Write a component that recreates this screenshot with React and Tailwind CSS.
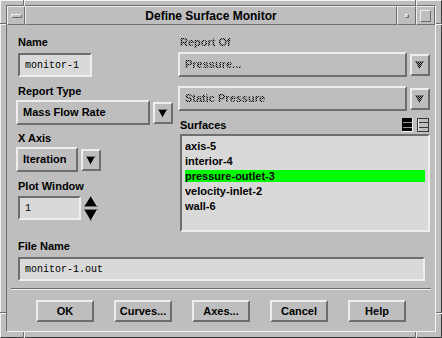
const raised2 = 'border-2 border-t-[#eeeeee] border-l-[#eeeeee] border-b-[#6e6e6e] border-r-[#6e6e6e]';
const sunken2 = 'border-2 border-t-[#6e6e6e] border-l-[#6e6e6e] border-b-[#eeeeee] border-r-[#eeeeee]';
const raised1 = 'border border-t-[#eeeeee] border-l-[#eeeeee] border-b-[#6e6e6e] border-r-[#6e6e6e]';

function Label({ children, grey }) {
  return (
    <div
      className={
        grey
          ? 'h-[13px] ml-[2px] text-[11px] leading-[13px] font-bold text-transparent bg-clip-text bg-[repeating-conic-gradient(#000_0_25%,#9a9a9a_0_50%)] bg-[length:2px_2px] w-fit'
          : 'h-[13px] ml-[2px] text-[11px] leading-[13px] font-bold'
      }
    >
      {children}
    </div>
  );
}

function Field({ className, value }) {
  return (
    <div className={`${sunken2} ${className} h-[24px] bg-[#d9d9d9] flex items-center pl-[5px] font-['Liberation_Mono',monospace] text-[10px]`}>
      {value}
    </div>
  );
}

function ArrowBtn({ grey }) {
  return (
    <div className={`${raised2} w-[20px] h-[22px] mt-[2px] shrink-0 flex items-center justify-center`}>
      <svg width="10" height="9" viewBox="0 0 10 9">
        <polygon points="0,0 10,0 5,9" fill={grey ? 'url(#stip)' : '#000'} />
        <line x1="9.5" y1="0.5" x2="5" y2="8.5" stroke="#e6e6e6" strokeWidth="1" />
        <line x1="0" y1="0.5" x2="9" y2="0.5" stroke="#777" strokeWidth="1" />
      </svg>
    </div>
  );
}

function Option({ className, text, grey }) {
  return (
    <div className={`${raised2} ${className} h-[25px] flex items-center pl-[5px] text-[11px] font-bold`}>
      {grey ? (
        <span className="text-transparent bg-clip-text bg-[repeating-conic-gradient(#000_0_25%,#9a9a9a_0_50%)] bg-[length:2px_2px]">
          {text}
        </span>
      ) : (
        text
      )}
    </div>
  );
}

export default function App() {
  const surfaces = ['axis-5', 'interior-4', 'pressure-outlet-3', 'velocity-inlet-2', 'wall-6'];
  return (
    <div className="w-[442px] h-[338px] bg-[#bebebe] font-['Liberation_Sans',Arial,sans-serif] text-black">
      <svg width="0" height="0" className="absolute">
        <defs>
          <pattern id="stip" width="2" height="2" patternUnits="userSpaceOnUse">
            <rect width="1" height="1" fill="#000" />
            <rect x="1" y="1" width="1" height="1" fill="#000" />
            <rect x="1" y="0" width="1" height="1" fill="#9a9a9a" />
            <rect x="0" y="1" width="1" height="1" fill="#9a9a9a" />
          </pattern>
        </defs>
      </svg>
      <div className="relative w-full h-full flex flex-col border border-t-[#f2f2f2] border-l-[#f2f2f2] border-b-[#3a3a3a] border-r-[#3a3a3a] pt-[4px] pl-[5px] pr-[5px] pb-[5px]">
        {/* frame corner ticks */}
        <div className="absolute left-[22px] top-[-1px] w-[1px] h-[6px] bg-[#6e6e6e]" />
        <div className="absolute left-[23px] top-[-1px] w-[1px] h-[6px] bg-[#f2f2f2]" />
        <div className="absolute left-[414px] top-[-1px] w-[1px] h-[6px] bg-[#6e6e6e]" />
        <div className="absolute left-[415px] top-[-1px] w-[1px] h-[6px] bg-[#f2f2f2]" />
        <div className="absolute left-[22px] bottom-[-1px] w-[1px] h-[6px] bg-[#6e6e6e]" />
        <div className="absolute left-[23px] bottom-[-1px] w-[1px] h-[6px] bg-[#f2f2f2]" />
        <div className="absolute left-[414px] bottom-[-1px] w-[1px] h-[6px] bg-[#6e6e6e]" />
        <div className="absolute left-[415px] bottom-[-1px] w-[1px] h-[6px] bg-[#f2f2f2]" />
        <div className="absolute left-[-1px] top-[22px] w-[6px] h-[1px] bg-[#6e6e6e]" />
        <div className="absolute left-[-1px] top-[23px] w-[6px] h-[1px] bg-[#f2f2f2]" />
        <div className="absolute right-[-1px] top-[22px] w-[6px] h-[1px] bg-[#6e6e6e]" />
        <div className="absolute right-[-1px] top-[23px] w-[6px] h-[1px] bg-[#f2f2f2]" />
        <div className="absolute left-[-1px] top-[311px] w-[6px] h-[1px] bg-[#6e6e6e]" />
        <div className="absolute left-[-1px] top-[312px] w-[6px] h-[1px] bg-[#f2f2f2]" />
        <div className="absolute right-[-1px] top-[311px] w-[6px] h-[1px] bg-[#6e6e6e]" />
        <div className="absolute right-[-1px] top-[312px] w-[6px] h-[1px] bg-[#f2f2f2]" />

        <div className="flex-1 flex flex-col border border-t-[#6e6e6e] border-l-[#6e6e6e] border-b-[#f2f2f2] border-r-[#f2f2f2]">
          {/* title bar */}
          <div className="h-[19px] flex shrink-0">
            <div className={`${raised1} w-[18px] flex items-center justify-center`}>
              <div className={`${raised1} w-[11px] h-[4px]`} />
            </div>
            <div className={`${raised1} flex-1 flex items-center justify-center text-[12px] font-bold leading-none`}>
              Define Surface Monitor
            </div>
            <div className={`${raised1} w-[19px] flex items-center justify-center`}>
              <div className={`${raised1} w-[4px] h-[4px]`} />
            </div>
            <div className={`${raised1} w-[19px] flex items-center justify-center`}>
              <div className={`${raised1} w-[11px] h-[12px]`} />
            </div>
          </div>

          {/* client area */}
          <div className="flex-1 flex flex-col">
            <div className="flex pt-[11px] pl-[9px]">
              <div className="w-[162px] flex flex-col">
                <Label>Name</Label>
                <Field className="w-[74px] ml-[2px] mt-[4px]" value="monitor-1" />
                <div className="mt-[8px]"><Label>Report Type</Label></div>
                <div className="flex gap-[3px] mt-[2px]">
                  <Option className="w-[134px]" text="Mass Flow Rate" />
                  <ArrowBtn />
                </div>
                <div className="mt-[7px]"><Label>X Axis</Label></div>
                <div className="flex gap-[3px] mt-[2px]">
                  <Option className="w-[62px]" text="Iteration" />
                  <ArrowBtn />
                </div>
                <div className="mt-[8px]"><Label>Plot Window</Label></div>
                <div className="flex gap-[3px] mt-[3px] ml-[2px]">
                  <Field className="w-[63px]" value="1" />
                  <svg width="14" height="25" viewBox="0 0 14 25">
                    <polygon points="7,0 14,11 0,11" fill="#000" />
                    <line x1="7.5" y1="0.5" x2="13.5" y2="10.5" stroke="#e6e6e6" />
                    <line x1="0" y1="10.5" x2="14" y2="10.5" stroke="#6e6e6e" />
                    <polygon points="0,13 14,13 7,25" fill="#000" />
                    <line x1="13.5" y1="13.5" x2="7.5" y2="24" stroke="#e6e6e6" />
                    <line x1="0" y1="13.5" x2="14" y2="13.5" stroke="#6e6e6e" />
                  </svg>
                </div>
              </div>

              <div className="w-[252px] flex flex-col">
                <Label grey>Report Of</Label>
                <div className="flex gap-[3px] mt-[3px]">
                  <Option className="w-[229px]" text="Pressure..." grey />
                  <ArrowBtn grey />
                </div>
                <div className="flex gap-[3px] mt-[9px]">
                  <Option className="w-[229px]" text="Static Pressure" grey />
                  <ArrowBtn grey />
                </div>
                <div className="flex items-start justify-between mt-[8px] pr-[1px]">
                  <div className="mt-0"><Label>Surfaces</Label></div>
                  <div className="flex gap-[4px] -mt-[1px]">
                    <svg width="11" height="14" viewBox="0 0 11 14">
                      <rect x="0" y="0" width="11" height="14" fill="#000" />
                      <rect x="1" y="4" width="9" height="1" fill="#9a9a9a" />
                      <rect x="1" y="9" width="9" height="1" fill="#9a9a9a" />
                      <rect x="10" y="0" width="1" height="14" fill="#eeeeee" />
                      <rect x="0" y="13" width="11" height="1" fill="#eeeeee" />
                    </svg>
                    <svg width="12" height="14" viewBox="0 0 12 14">
                      <rect x="0.5" y="0.5" width="11" height="13" fill="#bebebe" stroke="#3a3a3a" />
                      <rect x="1" y="4" width="10" height="1" fill="#3a3a3a" />
                      <rect x="1" y="9" width="10" height="1" fill="#3a3a3a" />
                      <rect x="1" y="1" width="1" height="12" fill="#eeeeee" />
                    </svg>
                  </div>
                </div>
                <div className={`${sunken2} ml-[2px] mt-[2px] h-[98px] bg-[#d9d9d9] pt-[4px] px-[3px] flex flex-col gap-[3px]`}>
                  {surfaces.map((s) => (
                    <div
                      key={s}
                      className={
                        s === 'pressure-outlet-3'
                          ? 'h-[12px] leading-[12px] text-[11px] font-bold bg-[#00ff00]'
                          : 'h-[12px] leading-[12px] text-[11px] font-bold'
                      }
                    >
                      {s}
                    </div>
                  ))}
                </div>
              </div>
            </div>

            <div className="pl-[11px] mt-[8px]">
              <div className="-ml-[2px]"><Label>File Name</Label></div>
              <Field className="w-[407px] mt-[4px]" value="monitor-1.out" />
            </div>

            <div className="mx-[4px] mt-[7px] h-[2px] border-t border-t-[#6e6e6e] border-b border-b-[#eeeeee]" />

            <div className="flex justify-center gap-[20px] mt-[10px]">
              {['OK', 'Curves...', 'Axes...', 'Cancel', 'Help'].map((b) => (
                <div key={b} className={`${raised2} w-[58px] h-[22px] flex items-center justify-center text-[11px] font-bold`}>
                  {b}
                </div>
              ))}
            </div>
          </div>
        </div>
      </div>
    </div>
  );
}
